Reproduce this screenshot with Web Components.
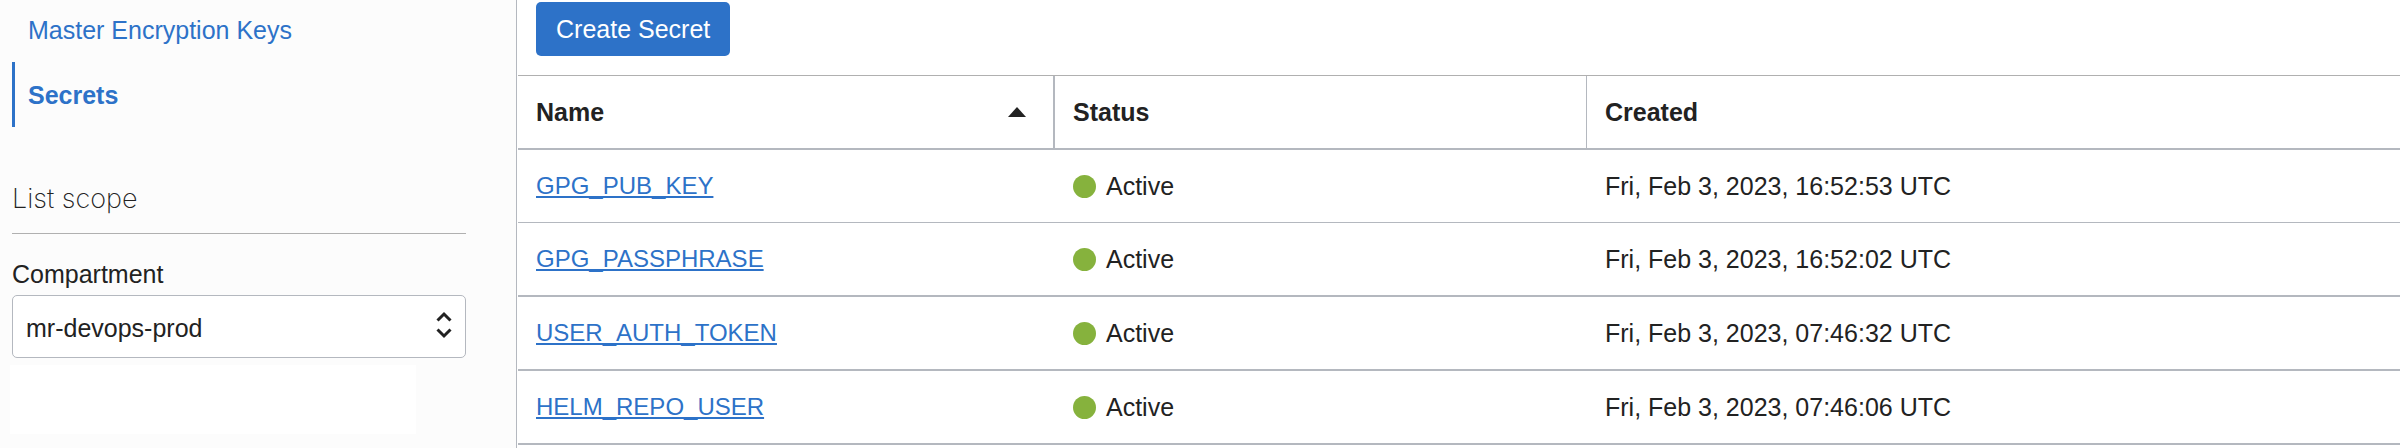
<!DOCTYPE html>
<html lang="en">
<head>
<meta charset="utf-8">
<meta name="viewport" content="width=device-width, initial-scale=1">
<title>Vault secrets</title>
<style>
  body {
    margin: 0;
    --blue: #2d72c8;
    --line: #b4b8bf;
    --green: #86b23d;
    color: #222;
    background: #fff;
    font: 25px/32px "Liberation Sans", Arial, sans-serif;
  }
</style>
</head>
<body>
<vault-page>
  <side-nav slot="side">
    <nav-item href="#keys">Master Encryption Keys</nav-item>
    <nav-item href="#secrets" current>Secrets</nav-item>
  </side-nav>
  <list-scope slot="side" heading="List scope"></list-scope>
  <action-button>Create Secret</action-button>
  <secrets-table></secrets-table>
</vault-page>

<template id="vault-page">
  <style>
    :host { display: grid; grid-template-columns: 517px minmax(0, 1fr); min-height: 100vh; }
    aside { box-sizing: border-box; padding: 0 48px 0 10px; background: #fcfcfc; border-right: 1px solid var(--line); }
    main { padding: 2px 0 0 1px; }
  </style>
  <aside><slot name="side"></slot></aside>
  <main><slot></slot></main>
</template>

<template id="side-nav">
  <style>
    :host { display: block; padding: 0 2px; }
    nav { display: flex; flex-direction: column; }
    ::slotted(nav-item:first-child) { margin-top: -3px; }
  </style>
  <nav><slot></slot></nav>
</template>

<template id="nav-item">
  <style>
    :host { display: block; }
    a { display: block; padding: 17px 13px 16px; line-height: 32px; color: var(--blue); text-decoration: none; border-left: 3px solid transparent; }
    :host([current]) a { border-left-color: var(--blue); font-weight: bold; }
  </style>
  <a><slot></slot></a>
</template>

<template id="list-scope">
  <style>
    :host { display: block; padding-top: 54px; }
    section { padding: 0 2px; }
    h2 { margin: 0 0 24px; padding-bottom: 16px; border-bottom: 1px solid #b0b0b0; font: 200 27px/36px Inter, "Liberation Sans", sans-serif; }
    label { display: block; margin-bottom: 5px; }
    .field { display: grid; align-items: center; }
    select, svg { grid-area: 1 / 1; }
    select { appearance: none; box-sizing: border-box; width: 100%; height: 63px; padding: 2px 40px 0 13px; border: 1px solid var(--line); border-radius: 5px; background: #fff; color: inherit; font: inherit; }
    svg { justify-self: end; margin: 0 14px 4px 0; pointer-events: none; }
    .note { width: 406px; height: 69px; margin-top: 7px; background: #fff; }
  </style>
  <section>
    <h2></h2>
    <label for="compartment">Compartment</label>
    <div class="field">
      <select id="compartment"><option>mr-devops-prod</option></select>
      <svg width="16" height="28" viewBox="0 0 16 28" fill="none" stroke="#222" stroke-width="3"><path d="M1.500 9.500 8 3l6.500 6.500M1.500 18.500 8 25l6.500-6.500"/></svg>
    </div>
  </section>
  <div class="note"></div>
</template>

<template id="action-button">
  <style>
    :host { display: block; padding: 0 18px 19px; }
    button { display: block; padding: 11px 20px; border: 0; border-radius: 5px; background: var(--blue); color: #fff; font: inherit; }
  </style>
  <button type="button"><slot></slot></button>
</template>

<template id="status-badge">
  <style>
    :host { display: flex; align-items: center; gap: 10px; }
    i { width: 23px; height: 23px; border-radius: 50%; background: var(--green); }
  </style>
  <i></i><slot></slot>
</template>

<template id="secrets-table">
  <style>
    :host { display: block; }
    table { width: 100%; table-layout: fixed; border-collapse: separate; border-spacing: 0; border-top: 1px solid #b0b0b0; }
    col.name { width: 537px; }
    col.status { width: 532px; }
    th, td { padding: 20px 18px; text-align: left; vertical-align: top; border-bottom: 2px solid var(--line); }
    th:first-child { border-right: 2px solid var(--line); }
    th:nth-child(2) { border-right: 1px solid var(--line); }
    tbody tr:first-child td { border-bottom-width: 1px; }
    .sort { display: flex; align-items: center; justify-content: space-between; box-sizing: border-box; width: 100%; padding: 0 9px 0 0; border: 0; background: none; color: inherit; font: inherit; }
    a { display: block; width: fit-content; color: var(--blue); font-size: 24px; text-decoration: underline 2px; text-underline-offset: 2px; text-decoration-skip-ink: none; }
  </style>
  <table>
    <colgroup><col class="name"><col class="status"><col></colgroup>
    <thead><tr>
      <th scope="col" aria-sort="ascending"><button class="sort" type="button">Name<svg width="18" height="10" viewBox="0 0 18 10"><path fill="#222" d="M9 0l9 10H0z"/></svg></button></th>
      <th scope="col">Status</th>
      <th scope="col">Created</th>
    </tr></thead>
    <tbody></tbody>
  </table>
</template>

<script>
  class TemplateElement extends HTMLElement {
    constructor() {
      super();
      const template = document.getElementById(this.localName);
      this.attachShadow({ mode: "open" }).append(template.content.cloneNode(true));
    }
  }

  class VaultPage extends TemplateElement {}
  class SideNav extends TemplateElement {}
  class ActionButton extends TemplateElement {}
  class StatusBadge extends TemplateElement {}

  class NavItem extends TemplateElement {
    connectedCallback() {
      const link = this.shadowRoot.querySelector("a");
      link.href = this.getAttribute("href");
      if (this.hasAttribute("current")) link.setAttribute("aria-current", "page");
    }
  }

  class ListScope extends TemplateElement {
    connectedCallback() {
      this.shadowRoot.querySelector("h2").textContent = this.getAttribute("heading");
    }
  }

  class SecretsTable extends TemplateElement {
    connectedCallback() {
      const secrets = [
        ["GPG_PUB_KEY", "Active", "Fri, Feb 3, 2023, 16:52:53 UTC"],
        ["GPG_PASSPHRASE", "Active", "Fri, Feb 3, 2023, 16:52:02 UTC"],
        ["USER_AUTH_TOKEN", "Active", "Fri, Feb 3, 2023, 07:46:32 UTC"],
        ["HELM_REPO_USER", "Active", "Fri, Feb 3, 2023, 07:46:06 UTC"]
      ];
      this.shadowRoot.querySelector("tbody").innerHTML = secrets.map(([name, status, created]) =>
        `<tr><td><a href="#${name}">${name}</a></td><td><status-badge>${status}</status-badge></td><td>${created}</td></tr>`
      ).join("");
    }
  }

  customElements.define("vault-page", VaultPage);
  customElements.define("side-nav", SideNav);
  customElements.define("nav-item", NavItem);
  customElements.define("list-scope", ListScope);
  customElements.define("action-button", ActionButton);
  customElements.define("status-badge", StatusBadge);
  customElements.define("secrets-table", SecretsTable);
</script>
</body>
</html>
